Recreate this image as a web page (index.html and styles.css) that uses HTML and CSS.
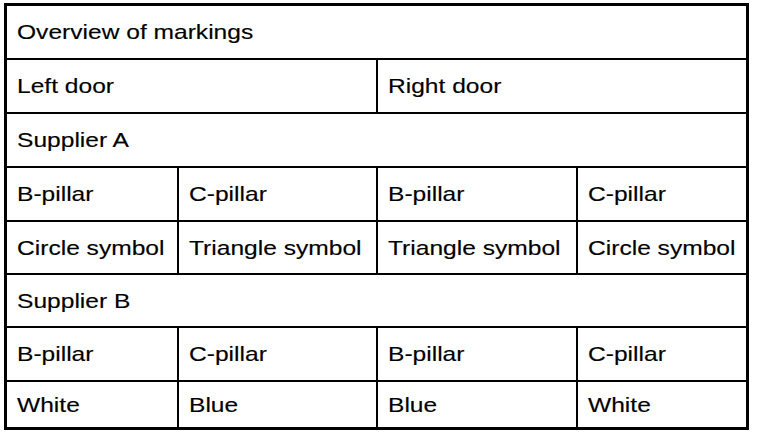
FILE: index.html
```html
<!DOCTYPE html>
<html>
<head>
<meta charset="utf-8">
<link rel="stylesheet" href="styles.css">
</head>
<body>
<div class="table">
  <div class="cell span4"><span class="txt">Overview of markings</span></div>
  <div class="cell span2"><span class="txt">Left door</span></div>
  <div class="cell span2"><span class="txt">Right door</span></div>
  <div class="cell span4"><span class="txt">Supplier A</span></div>
  <div class="cell"><span class="txt">B-pillar</span></div>
  <div class="cell"><span class="txt">C-pillar</span></div>
  <div class="cell"><span class="txt">B-pillar</span></div>
  <div class="cell"><span class="txt">C-pillar</span></div>
  <div class="cell"><span class="txt">Circle symbol</span></div>
  <div class="cell"><span class="txt">Triangle symbol</span></div>
  <div class="cell"><span class="txt">Triangle symbol</span></div>
  <div class="cell"><span class="txt">Circle symbol</span></div>
  <div class="cell span4"><span class="txt">Supplier B</span></div>
  <div class="cell"><span class="txt">B-pillar</span></div>
  <div class="cell"><span class="txt">C-pillar</span></div>
  <div class="cell"><span class="txt">B-pillar</span></div>
  <div class="cell"><span class="txt">C-pillar</span></div>
  <div class="cell"><span class="txt">White</span></div>
  <div class="cell"><span class="txt">Blue</span></div>
  <div class="cell"><span class="txt">Blue</span></div>
  <div class="cell"><span class="txt">White</span></div>
</div>
</body>
</html>
```
FILE: styles.css
```css
html, body {
  margin: 0;
  padding: 0;
  background: #ffffff;
}
body {
  padding: 3px 0 0 4px;
}
.table {
  width: 739px;
  display: grid;
  grid-template-columns: 170px 197px 198px 168px;
  grid-template-rows: 52px 52px 52px 52px 51px 51px 52px 45px;
  gap: 2px;
  background: #000000;
  border: 3px solid #000000;
  font-family: "Liberation Sans", Arial, sans-serif;
  font-size: 21px;
  color: #000000;
}
.cell {
  background: #ffffff;
  display: flex;
  align-items: center;
  padding-left: 10px;
  white-space: nowrap;
  overflow: hidden;
}
.txt {
  display: inline-block;
  transform: scaleX(1.17);
  transform-origin: left center;
  -webkit-text-stroke: 0.15px #000000;
}
.span4 { grid-column: span 4; }
.span2 { grid-column: span 2; }
```
